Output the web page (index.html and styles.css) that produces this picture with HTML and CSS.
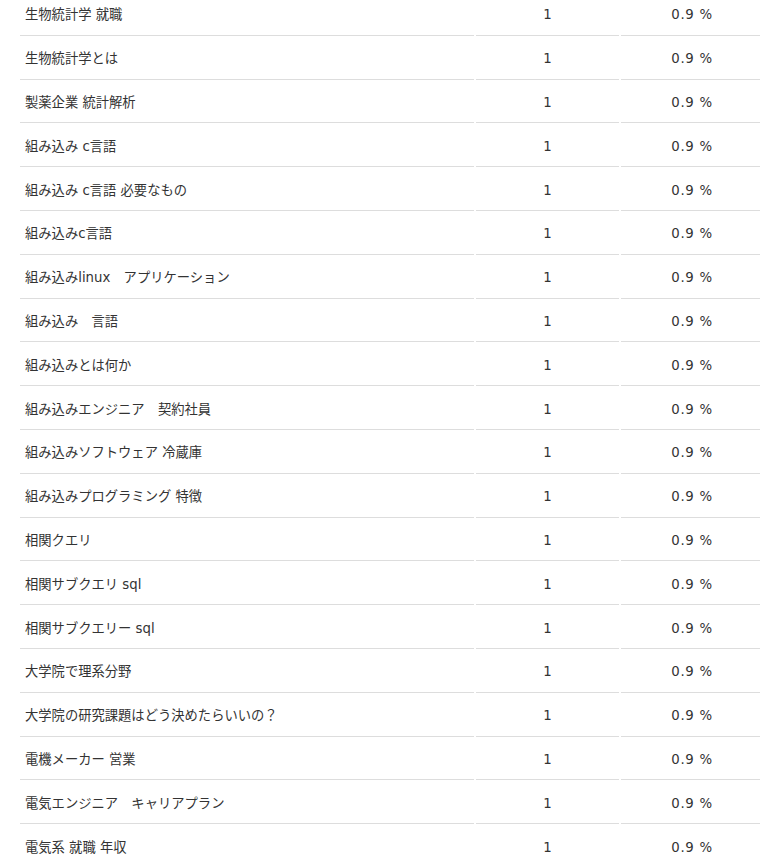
FILE: index.html
```html
<!DOCTYPE html>
<html lang="ja">
<head>
<meta charset="utf-8">
<link rel="stylesheet" href="styles.css">
</head>
<body>
<table class="rank">
<tbody>
<tr><td class="kw">生物統計学 就職</td><td class="num">1</td><td class="pct">0.9 %</td></tr>
<tr><td class="kw">生物統計学とは</td><td class="num">1</td><td class="pct">0.9 %</td></tr>
<tr><td class="kw">製薬企業 統計解析</td><td class="num">1</td><td class="pct">0.9 %</td></tr>
<tr><td class="kw">組み込み c言語</td><td class="num">1</td><td class="pct">0.9 %</td></tr>
<tr><td class="kw">組み込み c言語 必要なもの</td><td class="num">1</td><td class="pct">0.9 %</td></tr>
<tr><td class="kw">組み込みc言語</td><td class="num">1</td><td class="pct">0.9 %</td></tr>
<tr><td class="kw">組み込みlinux　アプリケーション</td><td class="num">1</td><td class="pct">0.9 %</td></tr>
<tr><td class="kw">組み込み　言語</td><td class="num">1</td><td class="pct">0.9 %</td></tr>
<tr><td class="kw">組み込みとは何か</td><td class="num">1</td><td class="pct">0.9 %</td></tr>
<tr><td class="kw">組み込みエンジニア　契約社員</td><td class="num">1</td><td class="pct">0.9 %</td></tr>
<tr><td class="kw">組み込みソフトウェア 冷蔵庫</td><td class="num">1</td><td class="pct">0.9 %</td></tr>
<tr><td class="kw">組み込みプログラミング 特徴</td><td class="num">1</td><td class="pct">0.9 %</td></tr>
<tr><td class="kw">相関クエリ</td><td class="num">1</td><td class="pct">0.9 %</td></tr>
<tr><td class="kw">相関サブクエリ sql</td><td class="num">1</td><td class="pct">0.9 %</td></tr>
<tr><td class="kw">相関サブクエリー sql</td><td class="num">1</td><td class="pct">0.9 %</td></tr>
<tr><td class="kw">大学院で理系分野</td><td class="num">1</td><td class="pct">0.9 %</td></tr>
<tr><td class="kw">大学院の研究課題はどう決めたらいいの？</td><td class="num">1</td><td class="pct">0.9 %</td></tr>
<tr><td class="kw">電機メーカー 営業</td><td class="num">1</td><td class="pct">0.9 %</td></tr>
<tr><td class="kw">電気エンジニア　キャリアプラン</td><td class="num">1</td><td class="pct">0.9 %</td></tr>
<tr><td class="kw">電気系 就職 年収</td><td class="num">1</td><td class="pct">0.9 %</td></tr>
</tbody>
</table>
</body>
</html>
```
FILE: styles.css
```css
html {
  overflow: hidden;
}
body {
  margin: 0;
  background: #fff;
  color: #333;
  font-family: "DejaVu Sans", "Noto Sans CJK JP", sans-serif;
  font-size: 13.3px;
}
.rank {
  margin: -8px 0 0 18px;
  border-collapse: separate;
  border-spacing: 2px 0;
  table-layout: fixed;
  width: 747px;
}
.rank td {
  height: 38.8px;
  padding: 4px 5px 0;
  border-bottom: 1px solid #ddd;
  vertical-align: middle;
  line-height: 18px;
  white-space: nowrap;
}
.rank td.kw {
  width: 444px;
  text-align: left;
}
.rank td.num {
  width: 133px;
  text-align: center;
}
.rank td.pct {
  width: 132px;
  text-align: center;
  letter-spacing: 0.7px;
}
```
